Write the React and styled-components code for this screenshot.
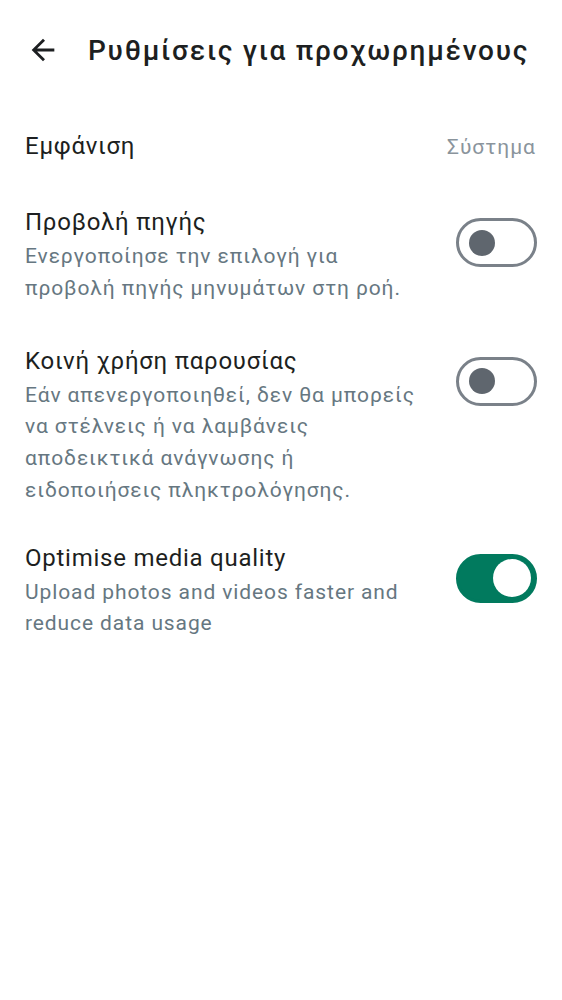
import React from "react";
import styled, { createGlobalStyle } from "styled-components";

const Global = createGlobalStyle`
  html, body { margin: 0; padding: 0; background: #ffffff; }
  body { font-family: Roboto, "Noto Sans", sans-serif; -webkit-font-smoothing: antialiased; }
`;

const Page = styled.div`
  width: 562px;
  min-height: 1000px;
  background: #ffffff;
  color: #1d1f21;
`;

const Header = styled.header`
  display: flex;
  align-items: center;
  height: 100px;
  padding: 0 0 0 26px;
  box-sizing: border-box;
`;

const BackButton = styled.button`
  display: flex;
  align-items: center;
  justify-content: center;
  width: 34px;
  height: 34px;
  padding: 0;
  margin: 0 28px 0 0;
  border: none;
  background: transparent;
  color: #1d1f21;
`;

const Title = styled.h1`
  margin: 0;
  font-size: 28px;
  font-weight: 500;
  letter-spacing: 1.75px;
  color: #1d1f21;
  white-space: nowrap;
`;

const List = styled.div`
  display: flex;
  flex-direction: column;
  padding-top: 30px;
`;

const ValueRow = styled.div`
  display: flex;
  align-items: center;
  justify-content: space-between;
  padding: 0 26px 0 25px;
  margin-bottom: 43px;
`;

const Row = styled.div`
  display: flex;
  align-items: flex-start;
  justify-content: space-between;
  padding: 0 25px;
  margin-bottom: ${(p) => p.$gap}px;
`;

const Texts = styled.div`
  display: flex;
  flex-direction: column;
  max-width: 395px;
`;

const ItemTitle = styled.div`
  font-size: 24px;
  line-height: 33px;
  letter-spacing: 0.75px;
  color: #1d1f21;
`;

const ItemSub = styled.div`
  font-size: 21px;
  line-height: 31.75px;
  letter-spacing: 0.9px;
  color: #667781;
  margin-top: 2px;
`;

const Value = styled.div`
  font-size: 21px;
  letter-spacing: 1px;
  color: #8a949c;
`;

const Switch = styled.div`
  flex: none;
  position: relative;
  box-sizing: border-box;
  width: 81px;
  height: 49px;
  margin-top: 12px;
  border-radius: 25px;
  border: 3px solid ${(p) => (p.$on ? "#017a5e" : "#7a8189")};
  background: ${(p) => (p.$on ? "#017a5e" : "#ffffff")};
`;

const Knob = styled.span`
  position: absolute;
  top: 50%;
  border-radius: 50%;
  transform: translateY(-50%);
  width: ${(p) => (p.$on ? 38 : 26)}px;
  height: ${(p) => (p.$on ? 38 : 26)}px;
  left: ${(p) => (p.$on ? 34 : 10)}px;
  background: ${(p) => (p.$on ? "#ffffff" : "#5f666e")};
`;

const Toggle = ({ on }) => (
  <Switch $on={on}>
    <Knob $on={on} />
  </Switch>
);

export default function App() {
  return (
    <Page>
      <Global />
      <Header>
        <BackButton aria-label="back">
          <svg width="34" height="34" viewBox="0 0 24 24">
            <path
              d="M20 11H7.83l5.59-5.59L12 4l-8 8 8 8 1.41-1.41L7.83 13H20v-2z"
              fill="#1d1f21"
            />
          </svg>
        </BackButton>
        <Title>Ρυθμίσεις για προχωρημένους</Title>
      </Header>
      <List>
        <ValueRow>
          <ItemTitle>Εμφάνιση</ItemTitle>
          <Value>Σύστημα</Value>
        </ValueRow>
        <Row $gap={40}>
          <Texts>
            <ItemTitle>Προβολή πηγής</ItemTitle>
            <ItemSub>
              Ενεργοποίησε την επιλογή για προβολή πηγής μηνυμάτων στη ροή.
            </ItemSub>
          </Texts>
          <Toggle on={false} />
        </Row>
        <Row $gap={35}>
          <Texts>
            <ItemTitle>Κοινή χρήση παρουσίας</ItemTitle>
            <ItemSub>
              Εάν απενεργοποιηθεί, δεν θα μπορείς να στέλνεις ή να λαμβάνεις
              αποδεικτικά ανάγνωσης ή ειδοποιήσεις πληκτρολόγησης.
            </ItemSub>
          </Texts>
          <Toggle on={false} />
        </Row>
        <Row $gap={0}>
          <Texts>
            <ItemTitle>Optimise media quality</ItemTitle>
            <ItemSub>Upload photos and videos faster and reduce data usage</ItemSub>
          </Texts>
          <Toggle on={true} />
        </Row>
      </List>
    </Page>
  );
}
